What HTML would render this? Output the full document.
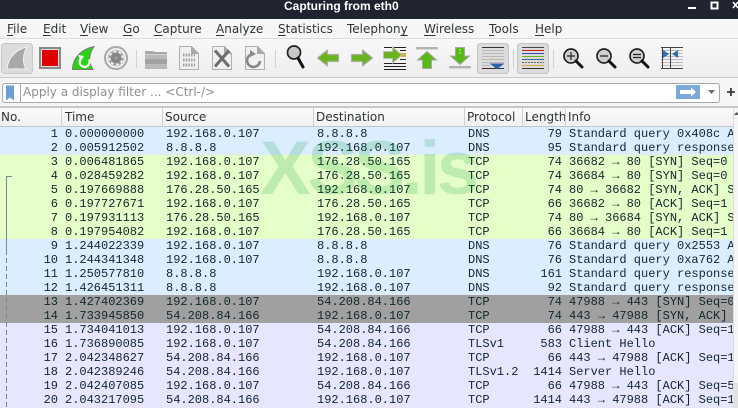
<!DOCTYPE html>
<html><head><meta charset="utf-8"><style>
html,body{margin:0;padding:0}
body{width:738px;height:408px;overflow:hidden;position:relative;background:#f5f5f5;font-family:"DejaVu Sans","Liberation Sans",sans-serif}
#title{position:absolute;left:0;top:0;width:738px;height:19px;background:#1f2430;color:#fff;font:bold 12px/14px "Liberation Sans",sans-serif}
#title span{position:absolute;left:284px;top:-1px;white-space:nowrap}
#menu{position:absolute;left:0;top:19px;width:738px;height:19px;background:#f6f6f6;font-size:12px;color:#2e3436}
#menu span{position:absolute;top:3px;line-height:15px;white-space:nowrap}
#menu u{text-underline-offset:2px}
#tb{position:absolute;left:0;top:38px;width:738px;height:40px;background:linear-gradient(#f8f8f8,#eeeeee);border-top:1px solid #dcdcdc;border-bottom:1px solid #c9c9c9;box-sizing:border-box}
svg{position:absolute;left:0;top:0}
#filter{position:absolute;left:0;top:78px;width:738px;height:28px;background:#f5f5f5}
#fbox{position:absolute;left:2px;top:5px;width:716px;height:18px;background:#fff;border:1px solid #a8a8a8;border-radius:3px}
#ph{position:absolute;left:23px;top:6px;font-size:12px;line-height:16px;color:#8b8f90;white-space:nowrap}
#band{position:absolute;left:0;top:106px;width:738px;height:2px;background:#c8c8c8}
#hdr{position:absolute;left:0;top:108px;width:733px;height:19px;background:linear-gradient(#fafafa,#f1f1f1);border-bottom:1px solid #c4c4c4;box-sizing:border-box;font-size:12px;color:#2e3436}
#hdr span{position:absolute;top:2px;line-height:15px;white-space:nowrap;overflow:hidden}
#hdr i{position:absolute;top:0;width:1px;height:19px;background:#d0d0d0}
#list{position:absolute;left:0;top:127px;width:733px;height:281px;overflow:hidden;font-family:"Liberation Mono",monospace;font-size:12px;color:#12272e;background:#e7e6ff}
.r{position:relative;height:14px;line-height:14px;white-space:pre;overflow:hidden}
.r span{position:absolute;top:0}
.n{right:675px}.t{left:65px}.s{left:166px}.d{left:317px}.p{left:468px}.l{right:171px}.i{left:569px}
.b{background:#daeeff}.g{background:#e4ffc7}.k{background:#a0a0a0}.v{background:#e7e6ff}
#wm{position:absolute;left:260px;top:131px;font:bold 76px/76px "Liberation Sans",sans-serif;color:rgba(0,140,40,.17);white-space:nowrap;letter-spacing:-3.5px}
#sb{position:absolute;left:733px;top:108px;width:5px;height:300px;background:#f5f5f5;border-left:1px solid #ddd;box-sizing:border-box}
#sb2{position:absolute;left:733px;top:383px;width:5px;height:25px;background:#e2e2e2}
</style></head><body>
<div id="title"><span>Capturing from eth0</span>
<svg width="738" height="19"><rect x="688" y="7" width="8" height="2" fill="#fff"/><rect x="711.500" y="2.500" width="6" height="6" fill="none" stroke="#fff" stroke-width="2"/><path d="M733 2l5 6M738 2l-5 6" stroke="#fff" stroke-width="1.600"/></svg></div>
<div id="menu">
<span style="left:7px"><u>F</u>ile</span><span style="left:43px"><u>E</u>dit</span><span style="left:80px"><u>V</u>iew</span><span style="left:123px"><u>G</u>o</span><span style="left:154px"><u>C</u>apture</span><span style="left:216px"><u>A</u>nalyze</span><span style="left:278px"><u>S</u>tatistics</span><span style="left:347px">Telephon<u>y</u></span><span style="left:424px"><u>W</u>ireless</span><span style="left:489px"><u>T</u>ools</span><span style="left:535px"><u>H</u>elp</span>
</div>
<div id="tb"></div>
<svg width="738" height="78" style="z-index:2">
<rect x="1.500" y="43.500" width="31" height="30" rx="3" fill="#dcdcdc" stroke="#c8c8c8"/>
<rect x="477.500" y="43.500" width="31" height="30" rx="3" fill="#dcdcdc" stroke="#c4c4c4"/>
<rect x="517.500" y="43.500" width="31" height="30" rx="3" fill="#dcdcdc" stroke="#c4c4c4"/>
<!-- shark fin -->
<path d="M7 69C8 57 17 49 27 47C23 54 22 62 26 69Z" fill="#a9a9a9" stroke="#f2f2f2" stroke-width="1"/>
<!-- stop -->
<rect x="40" y="48" width="20" height="20" fill="#e0e0e0" stroke="#8a8a8a" stroke-width="2"/>
<rect x="42" y="50" width="16" height="16" fill="#e00000"/>
<!-- restart fin -->
<path d="M72.500 69.500C73 56 83 49 94 46.500C89 54 88 62 93 69.500Z" fill="#28d414" stroke="#7a7a7a" stroke-width="1"/>
<path d="M89 59.500a5 5 0 1 1-8-1" fill="none" stroke="#fff" stroke-width="2.200"/><path d="M78 55l6 1-3 5z" fill="#fff"/>
<!-- gear -->
<circle cx="116" cy="58" r="11" fill="#f4f4f4" stroke="#a8a8a8" stroke-width="2"/>
<circle cx="116" cy="58" r="8" fill="none" stroke="#c8c8c8" stroke-width="1"/>
<circle cx="116" cy="58" r="6.500" fill="none" stroke="#8c8c8c" stroke-width="1.500" stroke-dasharray="2.500 2.600"/>
<circle cx="116" cy="58" r="5.500" fill="#868686"/>
<circle cx="116" cy="58" r="1.800" fill="#9c9c9c"/>
<g fill="#d0d0d0"><rect x="136" y="50" width="1" height="18"/><rect x="275" y="50" width="1" height="18"/><rect x="513" y="49" width="1" height="19"/><rect x="553" y="49" width="1" height="19"/></g>
<!-- folder -->
<path d="M145 51h8l2 1h12v17h-22z" fill="#a8a8a8"/><rect x="145" y="54" width="22" height="15" fill="#b9b9b9"/><rect x="145" y="59" width="22" height="5" fill="#a2a2a2"/><rect x="145" y="54" width="22" height="1" fill="#d2d2d2"/>
<!-- documents -->
<g fill="#f0f0f0" stroke="#b0b0b0"><path d="M179.500 46.500h12l7 7v16h-19z"/><path d="M212.500 46.500h12l7 7v16h-19z"/><path d="M245.500 46.500h12l7 7v16h-19z"/></g>
<g fill="#a8a8a8"><path d="M191 46l8 8h-8z"/><path d="M224 46l8 8h-8z"/><path d="M257 46l8 8h-8z"/></g>
<path d="M183 55h12M183 60h12M183 65h12" stroke="#a0a0a0" stroke-width="3" stroke-dasharray="1.500 1.200"/>
<path d="M215 50.500l14 16M229 50.500l-14 16" stroke="#6e6e6e" stroke-width="3" fill="none"/>
<path d="M260 61a6.500 6.500 0 1 1-6-7" stroke="#888" stroke-width="2.600" fill="none"/><path d="M250 50l6 4-6 3z" fill="#888"/>
<!-- find -->
<circle cx="294" cy="52.500" r="6.500" fill="#c8c8c8" stroke="#222" stroke-width="1.700"/>
<path d="M298 58l5 9" stroke="#111" stroke-width="3" stroke-linecap="round"/>
<!-- back / fwd -->
<path d="M317.500 58l10-8v4.500h11v7h-11v4.500z" fill="#68b41a" stroke="#aeaeae" stroke-width="1.200" stroke-linejoin="round"/>
<path d="M339.500 58" />
<path d="M372.500 58l-10-8v4.500h-11v7h11v4.500z" fill="#68b41a" stroke="#aeaeae" stroke-width="1.200" stroke-linejoin="round"/>
<!-- goto -->
<g stroke="#222"><path d="M384 47.500h22M384 63.500h22M384 66.500h22M384 69.500h22M400 50.500h6M400 59.500h6"/></g>
<rect x="400" y="53" width="6" height="4" fill="#e0aa40"/>
<path d="M383.500 51.500h9v-4.500l9.500 8-9.500 8v-4.500h-9z" fill="#68b41a" stroke="#c0c0c0" stroke-width="1"/>
<!-- top / bottom -->
<rect x="416" y="47" width="22" height="2.500" rx="1" fill="#b4b4b4"/>
<path d="M427 51.500l-9.500 8.500h5v8.500h9v-8.500h5z" fill="#58b818" stroke="#a8a8a8" stroke-width="1"/>
<rect x="449" y="66" width="22" height="2.500" rx="1" fill="#b4b4b4"/>
<path d="M460 64.500l-9.500-8.500h5v-8.500h9v8.500h5z" fill="#58b818" stroke="#a8a8a8" stroke-width="1"/>
<path d="M460 49v6" stroke="#bde89a" stroke-width="1.500" stroke-dasharray="1.500 1.500"/>
<!-- autoscroll -->
<g stroke="#b8b8b8"><path d="M482 50.500h22M482 53.500h22M482 56.500h22M482 59.500h22M482 62.500h22M482 65.500h8"/></g>
<path d="M482 47.500h22M482 68.500h22" stroke="#333"/>
<path d="M491 64h12l-6 4.500z" fill="#2f62a8" stroke="#2f62a8"/>
<!-- colorize -->
<path d="M522 47.500h22" stroke="#444"/><path d="M522 50.500h22" stroke="#d01818"/><path d="M522 53.500h22" stroke="#3050b8"/><path d="M522 56.500h22" stroke="#6ab020"/><path d="M522 59.500h22" stroke="#3a6898"/><path d="M522 62.500h22" stroke="#666" stroke-dasharray="2 1"/><path d="M522 65.500h22" stroke="#d8a840"/><path d="M522 68.500h22" stroke="#333"/>
<!-- zoom -->
<g fill="#cfcfcf" stroke="#222" stroke-width="1.700"><circle cx="571" cy="56" r="7"/><circle cx="604" cy="56" r="7"/><circle cx="637" cy="56" r="7"/></g>
<path d="M576 61l6 6M609 61l6 6M642 61l6 6" stroke="#111" stroke-width="3" stroke-linecap="round"/>
<path d="M567 56h8M571 52v8M600 56h8M633 54.500h8M633 57.500h8" stroke="#222" stroke-width="1.200"/>
<!-- resize -->
<g stroke="#bbb"><path d="M661 50.500h22M661 53.500h22M661 56.500h22M661 59.500h22M661 62.500h22M661 65.500h22"/></g>
<path d="M661 47.500h22M661 68.500h22M662.500 47v22M670.500 47v22M682.500 47v0" stroke="#444"/>
<path d="M663 50l6 4-6 4zM678 50l-6 4 6 4z" fill="#2f6eb5"/>
</svg>
<div id="filter"><div id="fbox"></div><div id="ph">Apply a display filter ... &lt;Ctrl-/&gt;</div></div>
<svg width="738" height="108" style="z-index:3">
<path d="M6 85.500h8v15l-4-3-4 3z" fill="#6d9fd8"/>
<rect x="20" y="84" width="1" height="18" fill="#a8a8a8"/>
<rect x="676" y="85" width="24" height="14" rx="1" fill="#7da9da"/>
<path d="M680 90h11v-2.500l5 4.500-5 4.500v-2.500h-11z" fill="#fff"/>
<path d="M708 90h7l-3.500 4z" fill="#6a6a6a"/>
<path d="M731 88v8M727 92h8" stroke="#3a3a3a" stroke-width="1.800"/>
</svg>
<div id="band"></div>
<div id="hdr">
<span style="left:1px">No.</span><span style="left:65px">Time</span><span style="left:165px">Source</span><span style="left:316px">Destination</span><span style="left:467px">Protocol</span><span style="left:525px;width:40px">Length</span><span style="left:568px">Info</span>
<i style="left:61px"></i><i style="left:162px"></i><i style="left:313px"></i><i style="left:464px"></i><i style="left:522px"></i><i style="left:565px"></i>
</div>
<div id="list">
<div class="r b"><span class="n">1</span><span class="t">0.000000000</span><span class="s">192.168.0.107</span><span class="d">8.8.8.8</span><span class="p">DNS</span><span class="l">79</span><span class="i">Standard query 0x408c A</span></div>
<div class="r b"><span class="n">2</span><span class="t">0.005912502</span><span class="s">8.8.8.8</span><span class="d">192.168.0.107</span><span class="p">DNS</span><span class="l">95</span><span class="i">Standard query response</span></div>
<div class="r g"><span class="n">3</span><span class="t">0.006481865</span><span class="s">192.168.0.107</span><span class="d">176.28.50.165</span><span class="p">TCP</span><span class="l">74</span><span class="i">36682 → 80 [SYN] Seq=0 W</span></div>
<div class="r g"><span class="n">4</span><span class="t">0.028459282</span><span class="s">192.168.0.107</span><span class="d">176.28.50.165</span><span class="p">TCP</span><span class="l">74</span><span class="i">36684 → 80 [SYN] Seq=0 W</span></div>
<div class="r g"><span class="n">5</span><span class="t">0.197669888</span><span class="s">176.28.50.165</span><span class="d">192.168.0.107</span><span class="p">TCP</span><span class="l">74</span><span class="i">80 → 36682 [SYN, ACK] Se</span></div>
<div class="r g"><span class="n">6</span><span class="t">0.197727671</span><span class="s">192.168.0.107</span><span class="d">176.28.50.165</span><span class="p">TCP</span><span class="l">66</span><span class="i">36682 → 80 [ACK] Seq=1 A</span></div>
<div class="r g"><span class="n">7</span><span class="t">0.197931113</span><span class="s">176.28.50.165</span><span class="d">192.168.0.107</span><span class="p">TCP</span><span class="l">74</span><span class="i">80 → 36684 [SYN, ACK] Se</span></div>
<div class="r g"><span class="n">8</span><span class="t">0.197954082</span><span class="s">192.168.0.107</span><span class="d">176.28.50.165</span><span class="p">TCP</span><span class="l">66</span><span class="i">36684 → 80 [ACK] Seq=1 A</span></div>
<div class="r b"><span class="n">9</span><span class="t">1.244022339</span><span class="s">192.168.0.107</span><span class="d">8.8.8.8</span><span class="p">DNS</span><span class="l">76</span><span class="i">Standard query 0x2553 A</span></div>
<div class="r b"><span class="n">10</span><span class="t">1.244341348</span><span class="s">192.168.0.107</span><span class="d">8.8.8.8</span><span class="p">DNS</span><span class="l">76</span><span class="i">Standard query 0xa762 A</span></div>
<div class="r b"><span class="n">11</span><span class="t">1.250577810</span><span class="s">8.8.8.8</span><span class="d">192.168.0.107</span><span class="p">DNS</span><span class="l">161</span><span class="i">Standard query response</span></div>
<div class="r b"><span class="n">12</span><span class="t">1.426451311</span><span class="s">8.8.8.8</span><span class="d">192.168.0.107</span><span class="p">DNS</span><span class="l">92</span><span class="i">Standard query response</span></div>
<div class="r k"><span class="n">13</span><span class="t">1.427402369</span><span class="s">192.168.0.107</span><span class="d">54.208.84.166</span><span class="p">TCP</span><span class="l">74</span><span class="i">47988 → 443 [SYN] Seq=0</span></div>
<div class="r k"><span class="n">14</span><span class="t">1.733945850</span><span class="s">54.208.84.166</span><span class="d">192.168.0.107</span><span class="p">TCP</span><span class="l">74</span><span class="i">443 → 47988 [SYN, ACK] S</span></div>
<div class="r v"><span class="n">15</span><span class="t">1.734041013</span><span class="s">192.168.0.107</span><span class="d">54.208.84.166</span><span class="p">TCP</span><span class="l">66</span><span class="i">47988 → 443 [ACK] Seq=1</span></div>
<div class="r v"><span class="n">16</span><span class="t">1.736890085</span><span class="s">192.168.0.107</span><span class="d">54.208.84.166</span><span class="p">TLSv1</span><span class="l">583</span><span class="i">Client Hello</span></div>
<div class="r v"><span class="n">17</span><span class="t">2.042348627</span><span class="s">54.208.84.166</span><span class="d">192.168.0.107</span><span class="p">TCP</span><span class="l">66</span><span class="i">443 → 47988 [ACK] Seq=1</span></div>
<div class="r v"><span class="n">18</span><span class="t">2.042389246</span><span class="s">54.208.84.166</span><span class="d">192.168.0.107</span><span class="p">TLSv1.2</span><span class="l">1414</span><span class="i">Server Hello</span></div>
<div class="r v"><span class="n">19</span><span class="t">2.042407085</span><span class="s">192.168.0.107</span><span class="d">54.208.84.166</span><span class="p">TCP</span><span class="l">66</span><span class="i">47988 → 443 [ACK] Seq=5</span></div>
<div class="r v"><span class="n">20</span><span class="t">2.043217095</span><span class="s">54.208.84.166</span><span class="d">192.168.0.107</span><span class="p">TCP</span><span class="l">1414</span><span class="i">443 → 47988 [ACK] Seq=1</span></div>
</div>
<div id="wm">XSS.is</div>
<svg width="738" height="408" style="z-index:4;pointer-events:none">
<path d="M12 176.500H6.500V250" fill="none" stroke="#7a8a8a"/>
<path d="M6.500 250V408" fill="none" stroke="#7a8a8a" stroke-dasharray="5 3"/>
</svg>
<div id="sb"></div><div id="sb2"></div>
<svg width="738" height="130" style="z-index:5"><path d="M734 115l2.500-3 2.500 3z" fill="#555"/></svg>
</body></html>
